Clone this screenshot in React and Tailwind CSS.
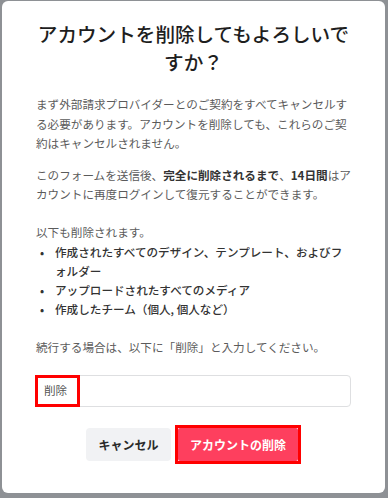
export default function App() {
  return (
    <div
      className="flex h-[498px] w-[388px] flex-col bg-[#8e9195] pb-[5px] pl-[2px] pr-[3px] pt-[1px]"
      style={{ fontFamily: '"Noto Sans CJK JP", "Noto Sans", sans-serif' }}
    >
      <div className="flex flex-1 flex-col rounded-[6px] bg-white px-[34px] pt-[19px]">
        <h1 className="text-center text-[19.6px] font-medium leading-[28px] text-[#1e1e1e]">
          アカウントを削除してもよろしいですか？
        </h1>

        <p className="mt-[19px] text-[11.6px] leading-[19.5px] text-[#5b5b5b]">
          まず外部請求プロバイダーとのご契約をすべてキャンセルする必要があります。アカウントを削除しても、これらのご契約はキャンセルされません。
        </p>

        <p className="mt-[12px] text-[11.6px] leading-[19.5px] text-[#5b5b5b]">
          このフォームを送信後、
          <b className="font-bold text-[#333]">完全に削除されるまで</b>、
          <b className="font-bold text-[#333]">14日間</b>
          はアカウントに再度ログインして復元することができます。
        </p>

        <div className="mt-[18px] text-[11.6px] leading-[19px] text-[#5b5b5b]">
          <p>以下も削除されます。</p>
          <ul className="mt-[1px] font-medium text-[#333]">
            <li className="flex">
              <span className="w-[19px] shrink-0 pl-[4px]">•</span>
              <span>作成されたすべてのデザイン、テンプレート、およびフォルダー</span>
            </li>
            <li className="flex">
              <span className="w-[19px] shrink-0 pl-[4px]">•</span>
              <span>アップロードされたすべてのメディア</span>
            </li>
            <li className="flex">
              <span className="w-[19px] shrink-0 pl-[4px]">•</span>
              <span>作成したチーム（個人, 個人など）</span>
            </li>
          </ul>
        </div>

        <p className="mt-[19px] text-[11.6px] leading-[19.5px] text-[#5b5b5b]">
          続行する場合は、以下に「削除」と入力してください。
        </p>

        <div className="mt-[18px] flex h-[32px] items-stretch rounded-[4px] border border-[#dedfe1] bg-white">
          <span className="-my-px -ml-[2px] flex items-center border-[3px] border-[#ff0000] pl-[6px] pr-[10px] text-[11.6px] text-[#555]">
            削除
          </span>
        </div>

        <div className="mt-[18px] flex items-center justify-center gap-[4px]">
          <button
            type="button"
            className="h-[33px] w-[85px] rounded-[4px] bg-[#f1f2f4] text-[12px] font-bold text-[#2a2a2a]"
          >
            キャンセル
          </button>
          <div className="border-[3px] border-[#ff0000]">
            <button
              type="button"
              className="h-[33px] w-[120px] rounded-[2px] bg-[#fe3f5e] text-[12px] font-bold text-white"
            >
              アカウントの削除
            </button>
          </div>
        </div>
      </div>
    </div>
  );
}
